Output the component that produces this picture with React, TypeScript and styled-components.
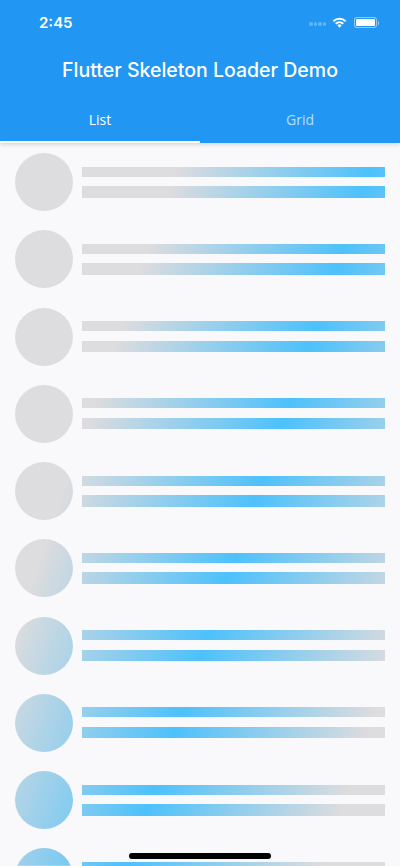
import React from 'react';
import styled, { createGlobalStyle, css } from 'styled-components';

const rows = Array.from({ length: 10 }, (_, i) => i);

const App: React.FC = () => {
  return (
    <Screen>
      <GlobalStyle />
      <Header>
        <StatusBar>
          <Clock>2:45</Clock>
          <StatusIcons>
            <Signal>
              <i />
              <i />
              <i />
              <i />
            </Signal>
            <svg width="15" height="11" viewBox="0 0 15 11" fill="none">
              <path d="M1.3 4.2a9 9 0 0 1 12.4 0" stroke="#fff" strokeWidth="1.9" />
              <path d="M3.7 6.7a5.5 5.5 0 0 1 7.6 0" stroke="#fff" strokeWidth="1.9" />
              <path d="M5.4 8.4a3 3 0 0 1 4.2 0L7.5 10.8z" fill="#fff" />
            </svg>
            <Battery />
          </StatusIcons>
        </StatusBar>
        <Title>Flutter Skeleton Loader Demo</Title>
        <Tabs>
          <Tab $active>List</Tab>
          <Tab>Grid</Tab>
        </Tabs>
      </Header>
      <List>
        {rows.map((row) => (
          <Row key={row}>
            <Avatar />
            <Lines>
              <Line $height={10} />
              <Line $height={11.5} />
            </Lines>
          </Row>
        ))}
      </List>
      <HomeIndicator />
    </Screen>
  );
};

const GlobalStyle = createGlobalStyle`
  html, body {
    margin: 0;
    padding: 0;
    background: #f9f8fb;
    overflow: hidden;
  }
`;

// one sweep across the whole screen, that's why the bars and circles line up
const shimmer = css`
  background-image: linear-gradient(
    109.3deg,
    #dddcde 222px,
    #4dc1fb 406px,
    #dddcde 590px
  );
  background-attachment: fixed;
`;

const Screen = styled.div`
  position: relative;
  width: 400px;
  height: 866px;
  overflow: hidden;
  background: #f9f8fb;
  font-family: Inter, 'Liberation Sans', sans-serif;
`;
const Header = styled.header`
  position: relative;
  z-index: 1;
  height: 143px;
  background: #2196f3;
  color: #fff;
  display: flex;
  flex-direction: column;
  box-shadow: 0 1px 5px rgba(0, 0, 0, 0.18);
`;
const StatusBar = styled.div`
  height: 44px;
  padding: 0 23px 0 39px;
  display: flex;
  align-items: center;
  justify-content: space-between;
`;
const Clock = styled.span`
  font-size: 15px;
  font-weight: 600;
`;
const StatusIcons = styled.div`
  display: flex;
  align-items: center;
  gap: 7px;
  padding-top: 1px;
`;
const Signal = styled.div`
  display: flex;
  gap: 1px;
  margin-right: -1px;
  padding-top: 3px;
  i {
    width: 3.5px;
    height: 3.5px;
    border-radius: 50%;
    background: rgba(255, 255, 255, 0.3);
  }
`;
const Battery = styled.div`
  position: relative;
  box-sizing: border-box;
  width: 23px;
  height: 11px;
  border: 1px solid rgba(255, 255, 255, 0.5);
  border-radius: 3px;
  padding: 1px;
  background: #fff content-box;
  &::after {
    content: '';
    position: absolute;
    right: -3px;
    top: 2.5px;
    width: 1.5px;
    height: 4px;
    border-radius: 0 1px 1px 0;
    background: rgba(255, 255, 255, 0.5);
  }
`;
const Title = styled.div`
  height: 52px;
  line-height: 52px;
  text-align: center;
  font-size: 19.5px;
  font-weight: 500;
`;
const Tabs = styled.div`
  flex: 1;
  display: flex;
`;
const Tab = styled.div<{ $active?: boolean }>`
  flex: 1;
  display: flex;
  align-items: center;
  justify-content: center;
  font-family: 'Open Sans', sans-serif;
  font-size: 14px;
  box-sizing: border-box;
  padding-top: 1px;
  border-bottom: 2px solid ${({ $active }) => ($active ? '#fff' : 'transparent')};
  color: ${({ $active }) => ($active ? '#fff' : 'rgba(255, 255, 255, 0.7)')};
`;
const List = styled.div`
  padding: 10px 15px 0 14.5px;
  display: flex;
  flex-direction: column;
  gap: 19.25px;
`;
const Row = styled.div`
  display: flex;
  align-items: center;
  gap: 9.5px;
  flex-shrink: 0;
`;
const Avatar = styled.div`
  ${shimmer}
  width: 58px;
  height: 58px;
  border-radius: 50%;
  flex-shrink: 0;
`;
const Lines = styled.div`
  flex: 1;
  display: flex;
  flex-direction: column;
  gap: 9.5px;
`;
const Line = styled.div<{ $height: number }>`
  ${shimmer}
  height: ${({ $height }) => $height}px;
`;
const HomeIndicator = styled.div`
  position: absolute;
  z-index: 2;
  left: 129px;
  bottom: 7px;
  width: 142px;
  height: 6px;
  border-radius: 3px;
  background: #000;
`;

export default App;
